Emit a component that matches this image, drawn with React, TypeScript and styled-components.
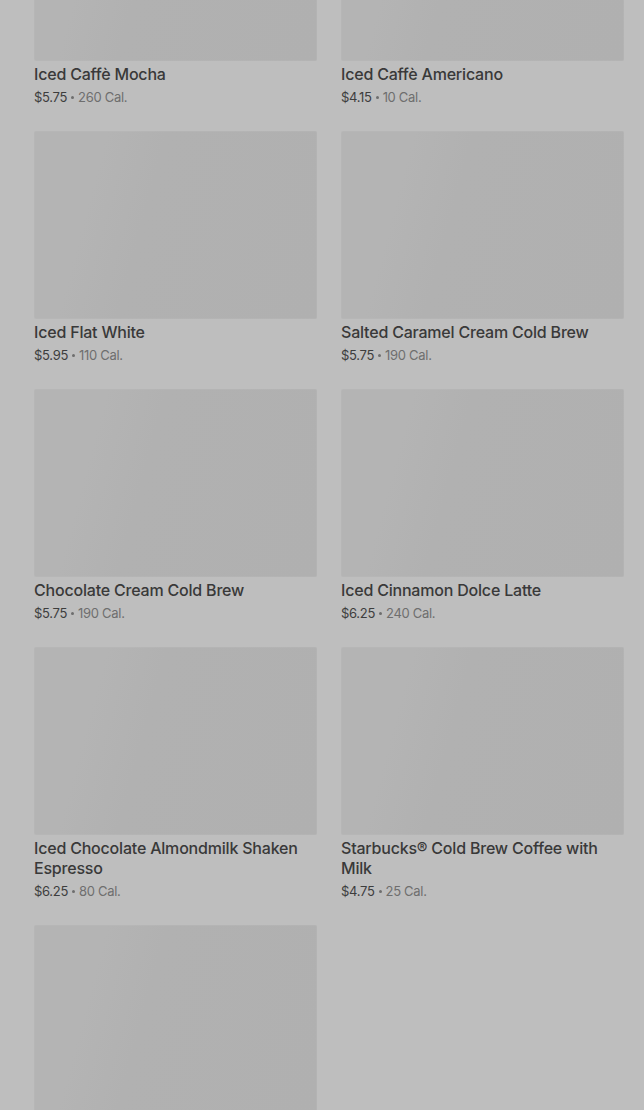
import React from "react";
import styled, { createGlobalStyle } from "styled-components";

const Global = createGlobalStyle`
  html, body { margin: 0; padding: 0; background: #bebebe; overflow: hidden; }
  body { font-family: Inter, "Noto Sans", sans-serif; -webkit-font-smoothing: antialiased; }
`;

const Page = styled.div`
  width: 644px;
  height: 1110px;
  overflow: hidden;
  background: #bebebe;
`;

const Grid = styled.div`
  margin-top: -127px;
  padding: 0 20px 0 34px;
  display: grid;
  grid-template-columns: 283px 283px;
  column-gap: 24px;
  row-gap: 24px;
  align-items: start;
`;

const Card = styled.div`
  display: flex;
  flex-direction: column;
`;

const Thumb = styled.div`
  height: 187.5px;
  border-radius: 2px;
  box-shadow: inset 0 0 0 1px rgba(255, 255, 255, 0.04);
  background: linear-gradient(
    105deg,
    #b4b4b4 0%,
    #b4b4b4 22%,
    #b1b1b1 40%,
    #b0b0b0 100%
  );
`;

const Title = styled.div`
  margin-top: 3.5px;
  font-size: 16px;
  line-height: 20px;
  font-weight: 500;
  color: #393939;
  letter-spacing: -0.2px;
`;

const Meta = styled.div`
  margin-top: 3px;
  height: 20px;
  display: flex;
  align-items: center;
  font-size: 13px;
  line-height: 20px;
  color: #3d3d3d;
  letter-spacing: -0.3px;
`;

const Dot = styled.span`
  display: inline-block;
  width: 3px;
  height: 3px;
  border-radius: 50%;
  background: #6e6e6e;
  margin: 1px 4px 0;
`;

const Cal = styled.span`
  color: #6e6e6e;
`;

const items = [
  { name: "Iced Caffè Mocha", price: "$5.75", cal: "260 Cal." },
  { name: "Iced Caffè Americano", price: "$4.15", cal: "10 Cal." },
  { name: "Iced Flat White", price: "$5.95", cal: "110 Cal." },
  { name: "Salted Caramel Cream Cold Brew", price: "$5.75", cal: "190 Cal." },
  { name: "Chocolate Cream Cold Brew", price: "$5.75", cal: "190 Cal." },
  { name: "Iced Cinnamon Dolce Latte", price: "$6.25", cal: "240 Cal." },
  { name: "Iced Chocolate Almondmilk Shaken Espresso", price: "$6.25", cal: "80 Cal." },
  { name: "Starbucks® Cold Brew Coffee with Milk", price: "$4.75", cal: "25 Cal." },
];

export default function App() {
  return (
    <Page>
      <Global />
      <Grid>
        {items.map((it) => (
          <Card key={it.name}>
            <Thumb />
            <Title>{it.name}</Title>
            <Meta>
              <span>{it.price}</span>
              <Dot />
              <Cal>{it.cal}</Cal>
            </Meta>
          </Card>
        ))}
        <Card>
          <Thumb />
        </Card>
      </Grid>
    </Page>
  );
}
